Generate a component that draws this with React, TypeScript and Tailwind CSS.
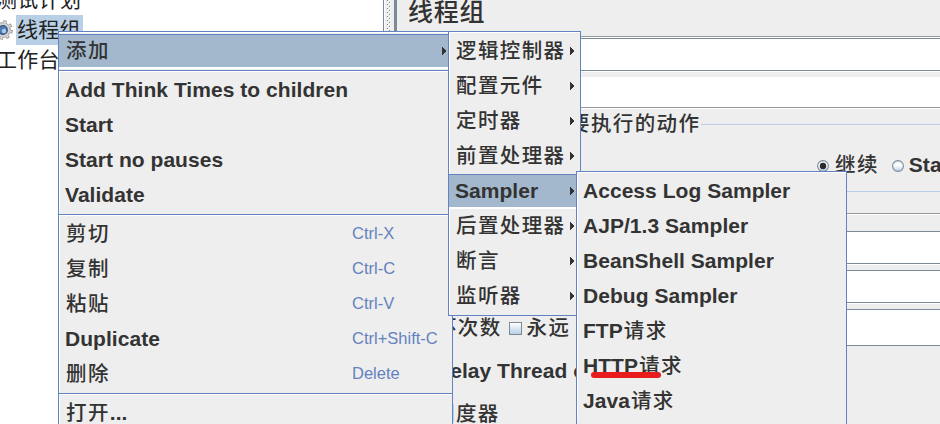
import React from "react";

/* Latin runs are bold; Chinese runs are lighter with a wider advance. */
function Label({ text }: { text: string }) {
  const runs = text.match(/[\u4e00-\u9fff]+|[^\u4e00-\u9fff]+/g) ?? [];
  return (
    <span className="relative -top-px flex items-center whitespace-pre text-[21px] leading-[35px] text-[#333]">
      {runs.map((run, i) =>
        /[\u4e00-\u9fff]/.test(run) ? (
          <span key={i} className="pl-px text-[20.5px] font-medium tracking-[1.4px]">{run}</span>
        ) : (
          <span key={i} className="font-bold tracking-[.04px]">{run}</span>
        ),
      )}
    </span>
  );
}

function Arrow() {
  return (
    <svg width="4" height="8" viewBox="0 0 4 8" className="shrink-0" shapeRendering="crispEdges">
      <path d="M0 0h1v1h1v1h1v1h1v2h-1v1h-1v1h-1v1h-1z" fill="#333" />
    </svg>
  );
}

type ItemProps = { text: string; accel?: string; arrow?: boolean; active?: boolean };

function Item({ text, accel, arrow, active }: ItemProps) {
  return (
    <div
      className={
        active
          ? "flex h-[35px] shrink-0 items-center border-t border-b-2 border-t-[#6382bf] border-b-white bg-[#a3b8cc] pl-1.5"
          : "flex h-[35px] shrink-0 items-center border-l border-white pl-[5px]"
      }
    >
      <div className="min-w-0 flex-1"><Label text={text} /></div>
      {accel && <span className="w-[100px] pb-0.5 text-[16.5px] text-[#6382bf]">{accel}</span>}
      {arrow && <div className={active ? "flex w-[10px]" : "flex w-[10px] pb-0.5"}><Arrow /></div>}
    </div>
  );
}

function Separator() {
  return (
    <div className="flex h-1 shrink-0 flex-col pt-px">
      <div className="h-px bg-[#6382bf]" />
      <div className="h-px bg-white" />
    </div>
  );
}

function Menu({ className, children }: { className: string; children: React.ReactNode }) {
  return (
    <div className={"absolute flex flex-col border border-[#6382bf] bg-[#eee] " + className}>
      <div className="mb-px h-px shrink-0 bg-white" />
      {children}
    </div>
  );
}

function Radio({ checked }: { checked?: boolean }) {
  return (
    <svg width="12" height="12" viewBox="0 0 12 12" className="shrink-0">
      <defs>
        <linearGradient id="knob" x1="0" y1="0" x2="0" y2="1">
          <stop offset="0" stopColor="#dde8f3" />
          <stop offset=".4" stopColor="#fff" />
          <stop offset="1" stopColor="#b8cfe5" />
        </linearGradient>
      </defs>
      <circle cx="6" cy="6" r="5.4" fill="url(#knob)" stroke="#7a8a99" strokeWidth="1.1" />
      {checked && <circle cx="6" cy="6" r="3.2" fill="#2b2b2b" />}
    </svg>
  );
}

function Gear() {
  return (
    <svg width="22" height="22" viewBox="0 0 22 22" className="-ml-[8px] shrink-0">
      <circle cx="11" cy="11" r="8.3" fill="none" stroke="#8d8d8d" strokeWidth="3" strokeDasharray="3.26 3.26" />
      <circle cx="11" cy="11" r="7.4" fill="#d4d4d4" stroke="#a2a2a2" strokeWidth="1" />
      <circle cx="11" cy="11" r="8" fill="none" stroke="#dedede" strokeWidth="2" strokeDasharray="2 4.28" strokeDashoffset="-.6" />
      <circle cx="11" cy="11" r="4.3" fill="#527bb1" stroke="#31517e" strokeWidth="1.2" />
      <circle cx="12" cy="12" r="2.2" fill="#a9cbed" />
    </svg>
  );
}

const tree = "whitespace-nowrap text-[21px] leading-[30px] tracking-[.3px] text-[#222]";

export default function App() {
  return (
    <div
      className="relative flex h-[424px] w-[940px] overflow-hidden bg-[#eee]"
      style={{ fontFamily: '"Liberation Sans", "Noto Sans CJK SC", sans-serif' }}
    >
      <aside className="flex w-[384px] shrink-0 flex-col border-r border-[#7a8a99] bg-white">
        <div className={tree + " -mt-[15px] h-[30px] -ml-1"}>测试计划</div>
        <div className="flex h-[30px] items-center">
          <Gear />
          <div className={tree + " ml-[2px] w-[67px] bg-[#b8cfe5] pl-px"}>线程组</div>
        </div>
        <div className={tree + " -ml-1 h-[30px]"}>工作台</div>
      </aside>

      <div className="flex w-[13px] shrink-0 justify-end border-l border-white">
        <svg width="7" height="424" className="shrink-0">
          <defs>
            <pattern id="grip" width="4" height="4" patternUnits="userSpaceOnUse">
              <rect width="1" height="1" fill="#7a8a99" />
              <rect x="2" y="2" width="1" height="1" fill="#7a8a99" />
              <rect x="1" y="1" width="1" height="1" fill="#fff" />
              <rect x="3" y="3" width="1" height="1" fill="#fff" />
            </pattern>
          </defs>
          <rect width="4" height="424" fill="url(#grip)" />
        </svg>
        <div className="w-[3px] bg-[#7a8a99]" />
      </div>

      <main className="flex min-w-0 flex-1 flex-col">
        <div className="flex h-[36px] shrink-0 items-center pb-[10px] pl-[11px] text-[25px] font-medium tracking-[.8px] text-[#333]">
          线程组
        </div>
        <div className="h-[2px] shrink-0 border-t border-[#999] bg-white" />
        <div className="h-[33px] shrink-0 border-y border-[#7a8a99] bg-white" />
        <div className="h-px shrink-0 bg-white" />
        <div className="mt-[5px] h-[31px] shrink-0 border-b border-[#999] bg-white" />
        <div className="h-px shrink-0 bg-white" />

        <div className="flex h-[31px] shrink-0 items-center pl-[171px]">
          <Label text="要执行的动作" />
          <div className="ml-[1px] h-px flex-1 bg-[#b8cfe5]" />
        </div>
        <div className="flex h-[52px] shrink-0 items-center border-b border-[#b8cfe5] pl-[420px]">
          <div className="flex h-[35px] items-center">
            <Radio checked />
            <div className="ml-[5px]"><Label text="继续" /></div>
            <div className="ml-[13px]"><Radio /></div>
            <div className="ml-[5px]"><Label text="Start Next Thread Loop" /></div>
          </div>
        </div>
        <div className="mt-[21px] h-[2px] shrink-0 border-t border-[#999] bg-white" />
        <div className="mt-[16px] h-[33px] shrink-0 border-y border-[#7a8a99] bg-white" />
        <div className="h-px shrink-0 bg-white" />
        <div className="mt-[5px] h-[33px] shrink-0 border-y border-[#7a8a99] bg-white" />
        <div className="h-px shrink-0 bg-white" />
        <div className="flex h-[43px] shrink-0 pt-[5px]">
          <div className="flex w-[180px] items-center pl-[16px]">
            <Label text="循环次数" />
            <div className="ml-[7px] size-[13px] shrink-0 border border-[#7a8a99] bg-linear-to-b from-white to-[#b8cfe5]" />
            <div className="ml-1"><Label text="永远" /></div>
          </div>
          <div className="h-[37px] flex-1 border-y border-[#7a8a99] bg-white" />
        </div>
        <div className="mt-[7px] flex h-[35px] shrink-0 items-center pl-[38px]">
          <Label text="Delay Thread creation until needed" />
        </div>
        <div className="mt-[8px] flex h-[35px] shrink-0 items-center pl-[36px]">
          <Label text="调度器" />
        </div>
      </main>

      <Menu className="left-[58px] top-[31px] h-[420px] w-[395px]">
        <Item text="添加" arrow active />
        <Separator />
        <Item text="Add Think Times to children" />
        <Item text="Start" />
        <Item text="Start no pauses" />
        <Item text="Validate" />
        <Separator />
        <Item text="剪切" accel="Ctrl-X" />
        <Item text="复制" accel="Ctrl-C" />
        <Item text="粘贴" accel="Ctrl-V" />
        <Item text="Duplicate" accel="Ctrl+Shift-C" />
        <Item text="删除" accel="Delete" />
        <Separator />
        <Item text="打开..." />
      </Menu>

      <Menu className="left-[448px] top-[31px] h-[285px] w-[133px]">
        <Item text="逻辑控制器" arrow />
        <Item text="配置元件" arrow />
        <Item text="定时器" arrow />
        <Item text="前置处理器" arrow />
        <Item text="Sampler" arrow active />
        <Item text="后置处理器" arrow />
        <Item text="断言" arrow />
        <Item text="监听器" arrow />
      </Menu>

      <Menu className="left-[576px] top-[171px] h-[280px] w-[271px]">
        <Item text="Access Log Sampler" />
        <Item text="AJP/1.3 Sampler" />
        <Item text="BeanShell Sampler" />
        <Item text="Debug Sampler" />
        <Item text="FTP请求" />
        <Item text="HTTP请求" />
        <Item text="Java请求" />
      </Menu>

      <div className="absolute left-[591px] top-[372px] h-[6px] w-[70px] rounded-full bg-[#e81c1c]" />
    </div>
  );
}
